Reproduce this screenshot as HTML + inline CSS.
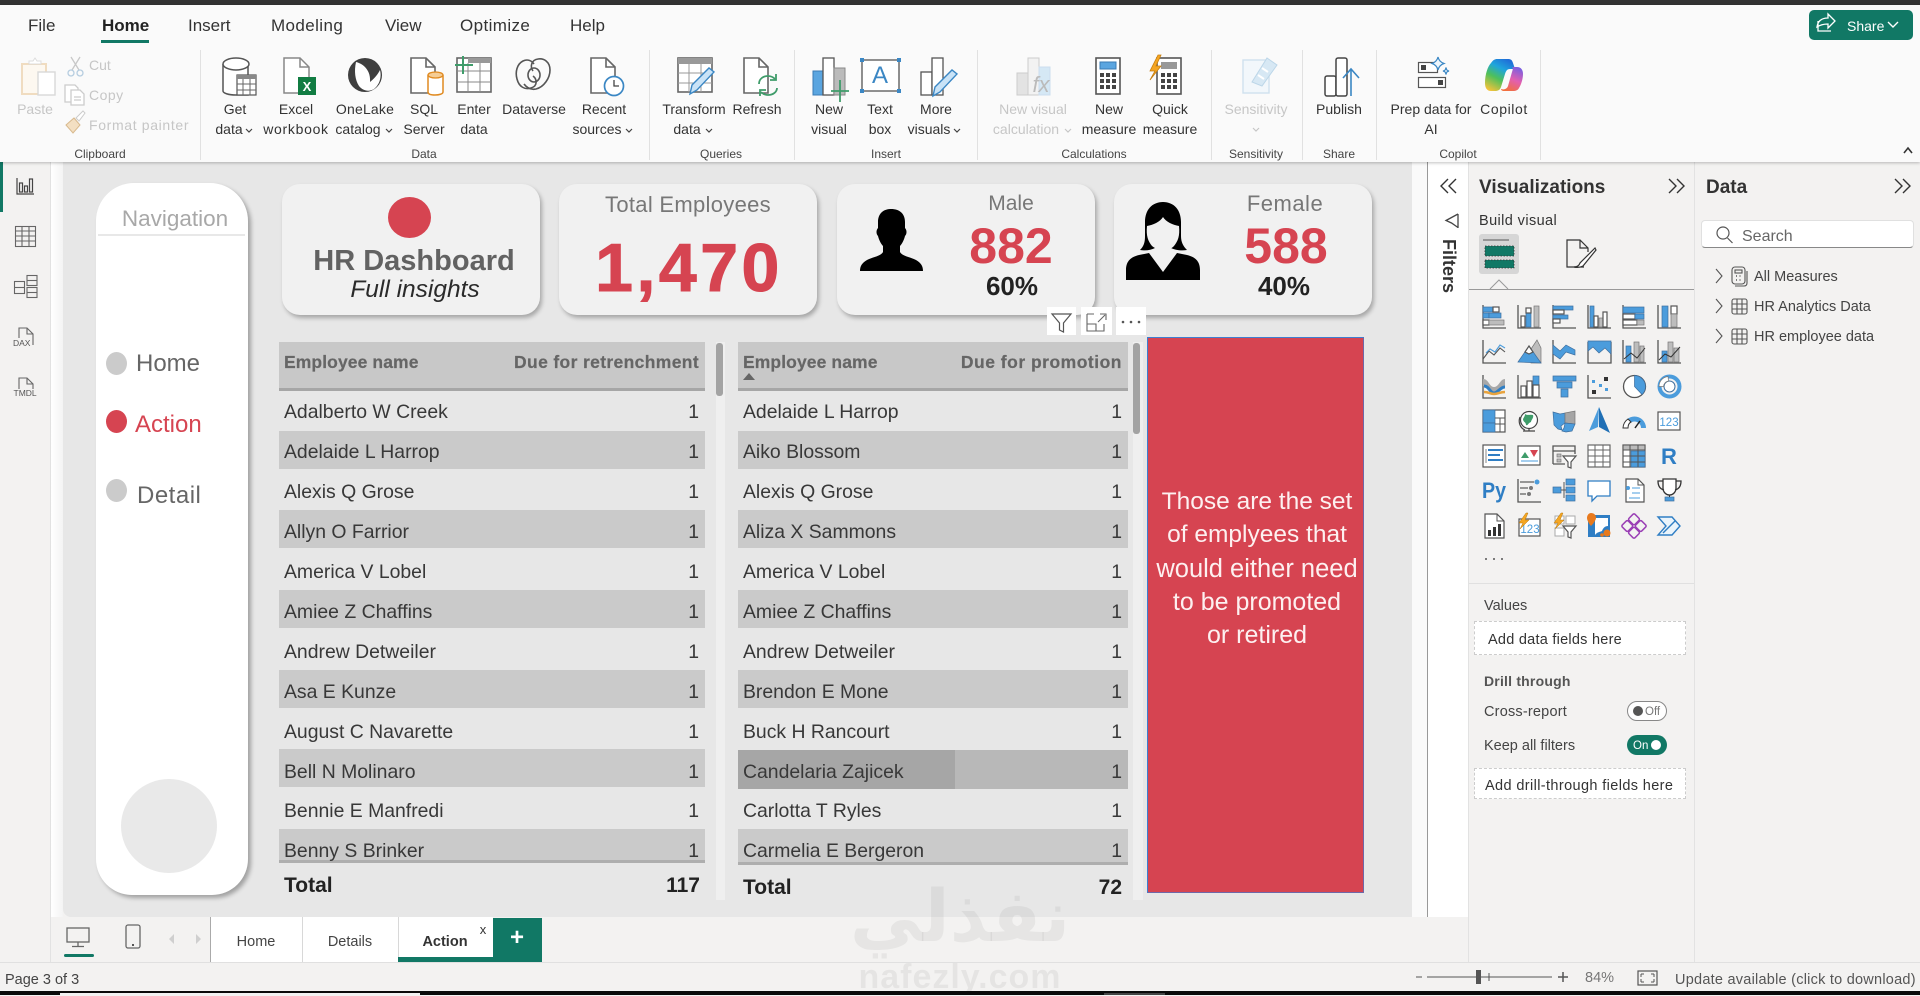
<!DOCTYPE html>
<html lang="en"><head><meta charset="utf-8"><title>HR Dashboard</title>
<style>
html,body{margin:0;padding:0;width:1920px;height:995px;overflow:hidden;background:#f3f2f1;font-family:"Liberation Sans",sans-serif;color:#333}
.a{position:absolute}
.t{position:absolute;line-height:0;white-space:nowrap;margin-top:1px}
.c{transform:translateX(-50%)}
.rl{font-size:14px;color:#333;margin-top:0}
.rd{font-size:14px;color:#c6c6c6;margin-top:0}
.gl{font-size:12px;color:#444;margin-top:1px}
.tab{font-size:17px;color:#333;margin-top:.5px}
.sep{position:absolute;top:50px;height:110px;width:1px;background:#e1e1e1}
.card{position:absolute;top:184px;height:131px;background:#f1f1f1;border-radius:18px;box-shadow:2px 3px 4px rgba(0,0,0,.28)}
.band{position:absolute;height:38px;background:#cacaca}
.r{position:absolute;height:0;line-height:0;font-size:19.4px;color:#383838;display:flex;justify-content:space-between;white-space:nowrap;margin-top:1.5px}
.red{color:#d64451}
.pane{font-size:14.5px;color:#444}
svg text{font-family:"Liberation Sans",sans-serif}
.s{fill:none;stroke:#555;stroke-width:1.3}
.sd{fill:none;stroke:#444;stroke-width:1.6}
.b{fill:#4b9cdc;stroke:#3f6f9f;stroke-width:.7}
.g{fill:#bdbdbd;stroke:#777;stroke-width:.7}
.w{fill:#fff;stroke:#555;stroke-width:1.2}
</style></head><body>

<div class="a" style="left:0;top:0;width:1920px;height:5px;background:#333"></div>
<div class="a" style="left:0;top:5px;width:1920px;height:157px;background:#fafafa;box-shadow:0 1px 3px rgba(0,0,0,.25);z-index:3"></div>

<div style="position:absolute;left:0;top:0;width:1920px;height:165px;z-index:4">
<span class="t tab" style="left:28px;top:25px">File</span>
<span class="t tab" style="left:102px;top:25px;font-weight:bold;color:#222">Home</span>
<span class="t tab" style="left:188px;top:25px">Insert</span>
<span class="t tab" style="left:271px;top:25px;letter-spacing:.4px">Modeling</span>
<span class="t tab" style="left:385px;top:25px">View</span>
<span class="t tab" style="left:460px;top:25px;letter-spacing:.4px">Optimize</span>
<span class="t tab" style="left:570px;top:25px">Help</span>
<div class="a" style="left:101px;top:40px;width:48px;height:3px;background:#117865"></div>

<span class="t rd c" style="left:35px;top:109px">Paste</span>
<span class="t rd" style="left:89px;top:65px">Cut</span>
<span class="t rd" style="left:89px;top:95px;letter-spacing:.5px">Copy</span>
<span class="t rd" style="left:89px;top:125px;letter-spacing:.65px">Format painter</span>
<span class="t gl c" style="left:100px;top:153px">Clipboard</span>
<div class="sep" style="left:200px"></div>

<span class="t rl c" style="left:235px;top:109px">Get</span><span class="t rl c" style="left:229px;top:129px">data</span>
<span class="t rl c" style="left:296px;top:109px">Excel</span><span class="t rl c" style="left:296px;top:129px;letter-spacing:.7px">workbook</span>
<span class="t rl c" style="left:365px;top:109px;letter-spacing:.2px">OneLake</span><span class="t rl c" style="left:358px;top:129px">catalog</span>
<span class="t rl c" style="left:424px;top:109px">SQL</span><span class="t rl c" style="left:424px;top:129px">Server</span>
<span class="t rl c" style="left:474px;top:109px">Enter</span><span class="t rl c" style="left:474px;top:129px">data</span>
<span class="t rl c" style="left:534px;top:109px">Dataverse</span>
<span class="t rl c" style="left:604px;top:109px">Recent</span><span class="t rl c" style="left:597px;top:129px">sources</span>
<span class="t gl c" style="left:424px;top:153px">Data</span>
<div class="sep" style="left:649px"></div>

<span class="t rl c" style="left:694px;top:109px">Transform</span><span class="t rl c" style="left:687px;top:129px">data</span>
<span class="t rl c" style="left:757px;top:109px">Refresh</span>
<span class="t gl c" style="left:721px;top:153px">Queries</span>
<div class="sep" style="left:794px"></div>

<span class="t rl c" style="left:829px;top:109px">New</span><span class="t rl c" style="left:829px;top:129px">visual</span>
<span class="t rl c" style="left:880px;top:109px">Text</span><span class="t rl c" style="left:880px;top:129px">box</span>
<span class="t rl c" style="left:936px;top:109px">More</span><span class="t rl c" style="left:929px;top:129px">visuals</span>
<span class="t gl c" style="left:886px;top:153px">Insert</span>
<div class="sep" style="left:977px"></div>

<span class="t rd c" style="left:1033px;top:109px">New visual</span><span class="t rd c" style="left:1026px;top:129px">calculation</span>
<span class="t rl c" style="left:1109px;top:109px">New</span><span class="t rl c" style="left:1109px;top:129px">measure</span>
<span class="t rl c" style="left:1170px;top:109px">Quick</span><span class="t rl c" style="left:1170px;top:129px">measure</span>
<span class="t gl c" style="left:1094px;top:153px">Calculations</span>
<div class="sep" style="left:1211px"></div>

<span class="t rd c" style="left:1256px;top:109px">Sensitivity</span>
<span class="t gl c" style="left:1256px;top:153px">Sensitivity</span>
<div class="sep" style="left:1302px"></div>

<span class="t rl c" style="left:1339px;top:109px">Publish</span>
<span class="t gl c" style="left:1339px;top:153px">Share</span>
<div class="sep" style="left:1376px"></div>

<span class="t rl c" style="left:1431px;top:109px">Prep data for</span><span class="t rl c" style="left:1431px;top:129px">AI</span>
<span class="t rl c" style="left:1504px;top:109px;letter-spacing:.6px">Copilot</span>
<span class="t gl c" style="left:1458px;top:153px">Copilot</span>
<div class="sep" style="left:1540px"></div>

<div class="a" style="left:1809px;top:10px;width:104px;height:30px;background:#117865;border-radius:5px"></div>
<span class="t" style="left:1847px;top:25px;font-size:14px;color:#fff">Share</span>

<svg class="a" style="left:0;top:0" width="1920" height="165" viewBox="0 0 1920 165">
<!-- chevrons -->
<g fill="none" stroke="#444" stroke-width="1.2">
<path d="M246 129l3 3 3-3M386 129l3 3 3-3M626 129l3 3 3-3M706 129l3 3 3-3M954 129l3 3 3-3"/>
<path d="M1065 129l3 3 3-3M1253 128l3 3 3-3" stroke="#c6c6c6"/>
<path d="M1904 153l4-5 4 5" stroke="#333" stroke-width="1.6"/>
<path d="M1888 22l5 5 5-5" stroke="#fff" stroke-width="1.4"/>
<path d="M1818 21v10h13M1817 27c1-7 6-9 11-9v-4l7 7-7 7v-4c-5 0-8 1-11 3z" stroke="#fff" stroke-width="1.3"/>
</g>
<!-- Paste -->
<rect x="22" y="64" width="24" height="30" fill="#fdf8f0" stroke="#f0dcc0" stroke-width="2"/>
<path d="M29 64v-3h4l2-3 2 3h4v3z" fill="#fff" stroke="#ddd"/>
<rect x="38" y="72" width="17" height="23" fill="#fff" stroke="#d8d8d8" stroke-width="1.4"/>
<!-- Cut -->
<g fill="none" stroke="#c8c8c8" stroke-width="1.3"><path d="M71 57l8 13M80 57l-8 13"/><circle cx="71" cy="73" r="3" stroke="#b6cde0"/><circle cx="80" cy="73" r="3" stroke="#b6cde0"/></g>
<!-- Copy -->
<g fill="#fff" stroke="#ccc" stroke-width="1.3"><path d="M65 85h10l3 3v14H65z"/><path d="M71 90h9l4 4v11H71z"/><path d="M74 97h7M74 100h7" fill="none"/></g>
<!-- Format painter -->
<path d="M66 125l8-7 6 7-7 8z" fill="#f3dfc2" stroke="#d8b98d"/><path d="M76 118l7-7 2 2-6 8z" fill="#fff" stroke="#ccc"/>
<!-- Get data -->
<path d="M223 64v27c0 2 5 4 13 4h12V64" fill="#fff" stroke="#555" stroke-width="1.5"/><ellipse cx="236" cy="64" rx="13" ry="6" fill="#fff" stroke="#555" stroke-width="1.5"/>
<rect x="237" y="75" width="19" height="20" fill="#fff" stroke="#555" stroke-width="1.2"/><rect x="237" y="75" width="19" height="4" fill="#888"/><path d="M243 79v16M250 79v16M237 84h19M237 90h19" stroke="#666" fill="none"/>
<!-- Excel -->
<path d="M284 58h16l9 9v26h-25z" fill="#fff" stroke="#888" stroke-width="1.5"/><path d="M300 58v9h9" fill="none" stroke="#888" stroke-width="1.5"/>
<rect x="298" y="77" width="18" height="18" fill="#117c42"/><text x="307" y="91" font-size="13" font-weight="bold" fill="#fff" text-anchor="middle">X</text>
<!-- OneLake -->
<circle cx="365" cy="75" r="17" fill="#3f3f3f"/><path d="M356 62c8 2 15 9 14 20 5-4 8-8 10-12 2 8-1 15-6 19-5 3-11 2-15-3-4-6-5-15-3-24z" fill="#fff"/>
<!-- SQL -->
<path d="M411 58h15l9 9v26h-24z" fill="#fff" stroke="#666" stroke-width="1.6"/><path d="M426 58v9h9" fill="none" stroke="#666" stroke-width="1.6"/>
<path d="M428 75v17c0 2 3 3 7 3s8-1 8-3V75" fill="#fff" stroke="#e08a20" stroke-width="1.5"/><ellipse cx="435.500" cy="75" rx="7.500" ry="3" fill="#f5cd95" stroke="#e08a20" stroke-width="1.3"/>
<!-- Enter data -->
<rect x="457" y="58" width="34" height="34" fill="#fff" stroke="#666" stroke-width="1.6"/><rect x="468" y="58" width="23" height="5" fill="#999"/><path d="M468 63v29M480 63v29M457 71h34M457 82h34" stroke="#888" fill="none"/>
<path d="M463 56v18M455 65h18" stroke="#3f9c6a" stroke-width="2" fill="none"/>
<!-- Dataverse -->
<g fill="none" stroke="#555" stroke-width="1.6"><path d="M534 64c-3-4-7-5-11-3-6 3-8 11-6 18 2 8 8 11 14 9 7-2 6-9 2-12"/><path d="M524 84c3 4 7 6 12 5 8-2 14-11 14-19 0-8-6-12-12-11-7 1-8 8-5 12"/><ellipse cx="534" cy="75" rx="6" ry="7"/></g>
<!-- Recent -->
<path d="M591 58h15l9 9v26h-24z" fill="#fff" stroke="#666" stroke-width="1.6"/><path d="M606 58v9h9" fill="none" stroke="#666" stroke-width="1.6"/>
<circle cx="614" cy="86" r="9.500" fill="#fff" stroke="#3b87c4" stroke-width="1.7"/><path d="M614 80v6h5" fill="none" stroke="#444" stroke-width="1.3"/>
<!-- Transform -->
<rect x="678" y="58" width="34" height="34" fill="#fff" stroke="#666" stroke-width="1.6"/><rect x="678" y="58" width="34" height="6" fill="#999"/><path d="M689 64v28M701 64v28M678 73h34M678 83h34" stroke="#999" fill="none"/>
<path d="M690 94l2-9 17-17 5 4-17 18z" fill="#c9e3f7" stroke="#3b87c4" stroke-width="1.4"/>
<!-- Refresh -->
<path d="M744 58h15l9 9v26h-24z" fill="#fff" stroke="#666" stroke-width="1.6"/><path d="M759 58v9h9" fill="none" stroke="#666" stroke-width="1.6"/>
<g fill="none" stroke="#3f9c6a" stroke-width="1.8"><path d="M759 84c0-5 4-8 9-8 3 0 5 1 7 3M777 88c0 4-4 7-9 7-3 0-5-1-7-3"/><path d="M776 74v6h-6M760 96v-6h6"/></g>
<!-- New visual -->
<rect x="813" y="71" width="10" height="24" fill="#5aa5e0" stroke="#3a7bb5"/><rect x="823" y="58" width="11" height="37" fill="#fff" stroke="#555" stroke-width="1.3"/><rect x="834" y="68" width="11" height="27" fill="#bbb" stroke="#888"/>
<path d="M840 80v22M831 91h18" stroke="#3f9c6a" stroke-width="1.8" fill="none"/>
<!-- Text box -->
<rect x="862" y="60" width="37" height="31" fill="#fff" stroke="#555" stroke-width="1.3"/><g fill="#3b87c4"><rect x="860" y="58" width="4" height="4"/><rect x="897" y="58" width="4" height="4"/><rect x="860" y="89" width="4" height="4"/><rect x="897" y="89" width="4" height="4"/></g>
<text x="880" y="83" font-size="24" fill="#3b87c4" text-anchor="middle">A</text>
<!-- More visuals -->
<rect x="921" y="72" width="11" height="23" fill="#fff" stroke="#555" stroke-width="1.3"/><rect x="932" y="58" width="11" height="37" fill="#fff" stroke="#555" stroke-width="1.3"/>
<path d="M933 96l2-9 17-17 5 4-17 18z" fill="#c9e3f7" stroke="#3b87c4" stroke-width="1.4"/>
<!-- New visual calc -->
<rect x="1017" y="73" width="11" height="22" fill="#e3e3e3" stroke="#ccc"/><rect x="1028" y="58" width="11" height="37" fill="#f2f2f2" stroke="#ccc"/><rect x="1039" y="67" width="11" height="28" fill="#d5e8f5" stroke="#cde"/>
<text x="1041" y="92" font-size="22" font-style="italic" font-family="Liberation Serif" fill="#bbb" text-anchor="middle">fx</text>
<!-- New measure -->
<rect x="1096" y="58" width="24" height="36" fill="#fff" stroke="#555" stroke-width="1.6"/><rect x="1100" y="62" width="16" height="7" fill="#5aa5e0" stroke="#3a7bb5"/>
<g fill="#444"><rect x="1100" y="73" width="4" height="4"/><rect x="1106" y="73" width="4" height="4"/><rect x="1112" y="73" width="4" height="4"/><rect x="1100" y="79" width="4" height="4"/><rect x="1106" y="79" width="4" height="4"/><rect x="1112" y="79" width="4" height="4"/><rect x="1100" y="85" width="4" height="4"/><rect x="1106" y="85" width="4" height="4"/><rect x="1112" y="85" width="4" height="4"/></g>
<!-- Quick measure -->
<rect x="1157" y="58" width="24" height="36" fill="#fff" stroke="#555" stroke-width="1.6"/><rect x="1161" y="62" width="16" height="7" fill="#999"/>
<g fill="#444"><rect x="1161" y="73" width="4" height="4"/><rect x="1167" y="73" width="4" height="4"/><rect x="1173" y="73" width="4" height="4"/><rect x="1161" y="79" width="4" height="4"/><rect x="1167" y="79" width="4" height="4"/><rect x="1173" y="79" width="4" height="4"/><rect x="1161" y="85" width="4" height="4"/><rect x="1167" y="85" width="4" height="4"/><rect x="1173" y="85" width="4" height="4"/></g>
<path d="M1158 55l-8 16h5l-5 9 11-14h-5l5-11z" fill="#f5a623" stroke="#c77f10" stroke-width=".8"/>
<!-- Sensitivity -->
<rect x="1243" y="60" width="26" height="33" fill="#f2f7fb" stroke="#cfe1ee" stroke-width="1.4"/><path d="M1252 82l15-24 10 7-15 21z" fill="#d7e8f4" stroke="#bcd6e8"/>
<path d="M1258 75l6 4M1262 68l6 4" stroke="#fff" stroke-width="2"/>
<!-- Publish -->
<g fill="#fff" stroke="#444" stroke-width="1.5"><rect x="1325" y="76" width="11" height="20" rx="2"/><rect x="1336" y="58" width="11" height="38" rx="2"/></g>
<path d="M1351 96V69M1343 78l8-9 8 9" fill="none" stroke="#3b87c4" stroke-width="1.6"/>
<!-- Prep data -->
<rect x="1418.500" y="62.500" width="19" height="10" fill="#fff" stroke="#555" stroke-width="1.200"/><rect x="1421" y="65" width="5" height="5" fill="#444"/>
<rect x="1418.500" y="77.500" width="27" height="10" fill="#fff" stroke="#555" stroke-width="1.200"/><rect x="1438" y="80" width="5" height="5" fill="#444"/>
<path d="M1438 57c1 4 3 5.500 6 6.500-3 1-5 2.500-6 6.500-1-4-3-5.500-6-6.500 3-1 5-2.500 6-6.500zM1446 67.500c.5 2.500 1 3 3 3.500-2 .5-2.500 1-3 3.500-.5-2.500-1-3-3-3.500 2-.5 2.500-1 3-3.500z" fill="#eef6fc" stroke="#3b87c4" stroke-width="1.200"/>
<!-- Copilot -->
<defs>
<linearGradient id="cp1" x1="0.700" y1="0" x2="0.200" y2="1"><stop offset="0" stop-color="#1f6fd8"/><stop offset=".3" stop-color="#1fa5dc"/><stop offset=".6" stop-color="#4ec05a"/><stop offset="1" stop-color="#f3c23a"/></linearGradient>
<linearGradient id="cp3" x1="0.700" y1="0" x2="0.300" y2="1"><stop offset="0" stop-color="#7a5fe0"/><stop offset=".5" stop-color="#e25fb0"/><stop offset="1" stop-color="#f2703c"/></linearGradient>
</defs>
<path d="M1497 59h11c3 0 4 1 5 4l2 6h-5c-3 0-4 2-5 5l-4 13c-1 3-3 4-6 4h-4c-4 0-6-3-6-8 0-9 3-17 6-20 2-3 4-4 6-4z" fill="url(#cp1)"/>
<path d="M1512 67h5c4 0 6 3 6 7 0 5-2 11-4 14-1 2-3 3-6 3h-9c-2 0-3-1-3-2 3 1 6 0 7-3l4-14c1-3 1-4 0-5z" fill="url(#cp3)"/>
</svg>
</div>

<!-- left sidebar -->
<div class="a" style="left:0;top:162px;width:50px;height:755px;background:#f3f2f1;border-right:1px solid #e2e2e2"></div>
<div class="a" style="left:51px;top:162px;width:12px;height:755px;background:linear-gradient(90deg,#fff,#f4f4f4)"></div>
<div class="a" style="left:0;top:162px;width:3px;height:50px;background:#117865"></div>
<svg class="a" style="left:0;top:162px" width="50" height="245" viewBox="0 162 50 245">
<g fill="none" stroke="#444" stroke-width="1.2"><path d="M17 178v16h17"/><rect x="19.500" y="183" width="3" height="9"/><rect x="24.500" y="186" width="3" height="6"/><rect x="29.500" y="179" width="3" height="13"/></g>
<g fill="none" stroke="#666" stroke-width="1.1"><rect x="15.500" y="226.500" width="20" height="20"/><path d="M15.500 231h20M15.500 236h20M15.500 241h20M22 226.500v20M29 226.500v20"/></g>
<g fill="none" stroke="#666" stroke-width="1.1"><rect x="14.500" y="281.500" width="10" height="12"/><path d="M14.500 287.500h10"/><rect x="27" y="275.500" width="10" height="10"/><path d="M27 280.500h10"/><rect x="27" y="287.500" width="10" height="10"/><path d="M27 292.500h10"/></g>
<g fill="none" stroke="#666" stroke-width="1.1"><path d="M19 338v-10h8l6 6v11"/><path d="M27 328v6h6"/></g>
<text x="13" y="346" font-size="8.500" fill="#555">DAX</text>
<g fill="none" stroke="#666" stroke-width="1.1"><path d="M19 389v-11h8l6 6v5"/><path d="M27 378v6h6"/></g>
<text x="13.500" y="396" font-size="8.500" fill="#555">TMDL</text>
</svg>

<!-- canvas -->
<div class="a" style="left:63px;top:162px;width:1349px;height:755px;background:#e7e7e7;border-radius:0 0 0 8px"></div>
<div class="a" style="left:1412px;top:162px;width:15px;height:755px;background:#fafafa"></div>
<div class="a" style="left:1427px;top:162px;width:1px;height:756px;background:#999"></div>
<div class="a" style="left:1428px;top:162px;width:40px;height:756px;background:#fff"></div>

<!-- nav -->
<div class="a" style="left:96px;top:183px;width:152px;height:712px;background:#fff;border-radius:38px 38px 36px 36px;box-shadow:3px 3px 4px rgba(0,0,0,.3)"></div>
<span class="t c" style="left:175px;top:218px;font-size:22.500px;color:#a8a8a8">Navigation</span>
<div class="a" style="left:98px;top:234px;width:147px;height:2px;background:#e8e8e8"></div>
<div class="a" style="left:106px;top:352px;width:21px;height:23px;border-radius:50%;background:#cbcbcb"></div>
<span class="t" style="left:136px;top:363px;font-size:24px;color:#666">Home</span>
<div class="a" style="left:106px;top:410px;width:21px;height:23px;border-radius:50%;background:#d64451"></div>
<span class="t red" style="left:135px;top:423.500px;font-size:24px">Action</span>
<div class="a" style="left:106px;top:479px;width:21px;height:23px;border-radius:50%;background:#cbcbcb"></div>
<span class="t" style="left:137px;top:494.500px;font-size:24px;color:#666;letter-spacing:.5px">Detail</span>
<div class="a" style="left:121px;top:779px;width:96px;height:94px;border-radius:50%;background:#e9e9e9"></div>

<!-- cards -->
<div class="card" style="left:282px;width:258px"></div>
<div class="a" style="left:388px;top:197px;width:43px;height:41px;border-radius:50%;background:#d64451"></div>
<span class="t c" style="left:414px;top:260px;font-size:29px;font-weight:bold;color:#626262">HR Dashboard</span>
<span class="t c" style="left:415px;top:288.500px;font-size:24.500px;font-style:italic;color:#2a2a2a">Full insights</span>

<div class="card" style="left:559px;width:258px"></div>
<span class="t c" style="left:688px;top:204px;font-size:22px;color:#777;letter-spacing:.3px">Total Employees</span>
<span class="t c red" style="left:689px;top:267px;font-size:68px;font-weight:bold;letter-spacing:3.5px;-webkit-text-stroke:1px #d64451">1,470</span>

<div class="card" style="left:837px;width:258px"></div>
<span class="t c" style="left:1011px;top:203px;font-size:21px;color:#777">Male</span>
<span class="t c red" style="left:1011px;top:245px;font-size:50px;font-weight:bold">882</span>
<span class="t c" style="left:1012px;top:285px;font-size:26px;font-weight:bold;color:#222">60%</span>

<div class="card" style="left:1114px;width:258px"></div>
<span class="t c" style="left:1285px;top:203px;font-size:22px;color:#777;letter-spacing:.5px">Female</span>
<span class="t c red" style="left:1286px;top:245px;font-size:50px;font-weight:bold">588</span>
<span class="t c" style="left:1284px;top:285px;font-size:26px;font-weight:bold;color:#222">40%</span>

<svg class="a" style="left:850px;top:195px" width="360" height="145" viewBox="850 195 360 145">
<path d="M891 209c-8 0-13 5-13 13v6c-2 2-2 6 0 8 1 4 3 8 5 10v6c-2 4-10 5-16 8-5 3-7 6-7 11h63c0-5-2-8-7-11-6-3-14-4-16-8v-6c2-2 4-6 5-10 2-2 2-6 0-8v-6c0-8-5-13-14-13z" fill="#000"/>
<path d="M1163 202c-11 0-18 8-18 20v14c0 6-1 10-5 14 6 1 11 0 15-2h16c4 2 10 3 16 2-4-4-6-8-6-14v-14c0-12-7-20-18-20z" fill="#000"/>
<path d="M1147 226c6-1 13-4 16-9 3 5 10 8 16 9 1 10-1 15-5 20-3 3-7 5-11 5-3 0-7-2-11-5-4-5-6-10-5-20z" fill="#f1f1f1"/>
<path d="M1126 280v-10c0-9 5-13 13-15l10-2 14 19 14-19 10 2c8 2 13 6 13 15v10z" fill="#000"/>
</svg>

<!-- visual toolbar -->
<div class="a" style="left:1047px;top:307px;width:29px;height:28px;background:#fff"></div>
<div class="a" style="left:1081px;top:307px;width:31px;height:28px;background:#fff"></div>
<div class="a" style="left:1116px;top:307px;width:30px;height:28px;background:#fff"></div>
<svg class="a" style="left:1047px;top:307px" width="100" height="28" viewBox="1047 307 100 28">
<path d="M1052 314h19l-7.500 9v9l-4-2v-7z" fill="none" stroke="#555" stroke-width="1.2"/>
<path d="M1087 314h7M1087 314v17h17v-7M1087 324h9v7M1098 322l7-7M1100 314h6v6" fill="none" stroke="#666" stroke-width="1.1"/>
<g fill="#555"><circle cx="1123" cy="322" r="1.300"/><circle cx="1131" cy="322" r="1.300"/><circle cx="1139" cy="322" r="1.300"/></g>
</svg>

<!-- Table 1 -->
<div class="a" style="left:279px;top:342px;width:426px;height:49px;background:#c8c8c8;border-bottom:3px solid #a6a6a6;box-sizing:border-box"></div>
<span class="t" style="left:284px;top:361px;font-size:17.500px;font-weight:bold;color:#666;letter-spacing:.1px;-webkit-text-stroke:.2px #666">Employee name</span>
<span class="t" style="right:1221px;top:361px;font-size:17.500px;font-weight:bold;color:#666;letter-spacing:.35px;-webkit-text-stroke:.2px #666">Due for retrenchment</span>
<div class="a" style="left:716px;top:342px;width:9px;height:558px;background:#efefef"></div>
<div class="a" style="left:716px;top:343px;width:7px;height:53px;background:#a3a3a3;border-radius:3px"></div>
<div class="band" style="left:279px;width:426px;top:431px"></div>
<div class="band" style="left:279px;width:426px;top:510px"></div>
<div class="band" style="left:279px;width:426px;top:590px"></div>
<div class="band" style="left:279px;width:426px;top:670px"></div>
<div class="band" style="left:279px;width:426px;top:749px"></div>
<div class="band" style="left:279px;width:426px;top:829px;height:34px;border-bottom:3px solid #aeaeae;box-sizing:border-box"></div>
<div class="r" style="left:284px;width:415px;top:410px"><span>Adalberto W Creek</span><span>1</span></div>
<div class="r" style="left:284px;width:415px;top:450px"><span>Adelaide L Harrop</span><span>1</span></div>
<div class="r" style="left:284px;width:415px;top:490px"><span>Alexis Q Grose</span><span>1</span></div>
<div class="r" style="left:284px;width:415px;top:530px"><span>Allyn O Farrior</span><span>1</span></div>
<div class="r" style="left:284px;width:415px;top:570px"><span>America V Lobel</span><span>1</span></div>
<div class="r" style="left:284px;width:415px;top:610px"><span>Amiee Z Chaffins</span><span>1</span></div>
<div class="r" style="left:284px;width:415px;top:650px"><span>Andrew Detweiler</span><span>1</span></div>
<div class="r" style="left:284px;width:415px;top:690px"><span>Asa E Kunze</span><span>1</span></div>
<div class="r" style="left:284px;width:415px;top:730px"><span>August C Navarette</span><span>1</span></div>
<div class="r" style="left:284px;width:415px;top:770px"><span>Bell N Molinaro</span><span>1</span></div>
<div class="r" style="left:284px;width:415px;top:809px"><span>Bennie E Manfredi</span><span>1</span></div>
<div class="r" style="left:284px;width:415px;top:849px"><span>Benny S Brinker</span><span>1</span></div>
<div class="r" style="left:284px;width:416px;top:884.500px;font-weight:bold;font-size:21px;color:#222"><span>Total</span><span>117</span></div>

<!-- Table 2 -->
<div class="a" style="left:738px;top:342px;width:390px;height:49px;background:#c8c8c8;border-bottom:3px solid #a6a6a6;box-sizing:border-box"></div>
<span class="t" style="left:743px;top:361px;font-size:17.500px;font-weight:bold;color:#666;letter-spacing:.1px;-webkit-text-stroke:.2px #666">Employee name</span>
<span class="t" style="right:798px;top:361px;font-size:17.500px;font-weight:bold;color:#666;letter-spacing:.5px;-webkit-text-stroke:.2px #666">Due for promotion</span>
<svg class="a" style="left:742px;top:371px" width="16" height="10"><path d="M1 9L7 2l6 7z" fill="#666"/></svg>
<div class="a" style="left:1133px;top:342px;width:10px;height:558px;background:#efefef"></div>
<div class="a" style="left:1133px;top:343px;width:7px;height:91px;background:#a3a3a3;border-radius:3px"></div>
<div class="band" style="left:738px;width:390px;top:431px"></div>
<div class="band" style="left:738px;width:390px;top:510px"></div>
<div class="band" style="left:738px;width:390px;top:590px"></div>
<div class="band" style="left:738px;width:390px;top:670px"></div>
<div class="band" style="left:738px;width:390px;top:750px;background:#b8b8b8;height:39px"></div>
<div class="band" style="left:738px;width:217px;top:750px;background:#a6a6a6;height:39px"></div>
<div class="band" style="left:738px;width:390px;top:829px;height:36px;border-bottom:3px solid #aeaeae;box-sizing:border-box"></div>
<div class="r" style="left:743px;width:379px;top:410px"><span>Adelaide L Harrop</span><span>1</span></div>
<div class="r" style="left:743px;width:379px;top:450px"><span>Aiko Blossom</span><span>1</span></div>
<div class="r" style="left:743px;width:379px;top:490px"><span>Alexis Q Grose</span><span>1</span></div>
<div class="r" style="left:743px;width:379px;top:530px"><span>Aliza X Sammons</span><span>1</span></div>
<div class="r" style="left:743px;width:379px;top:570px"><span>America V Lobel</span><span>1</span></div>
<div class="r" style="left:743px;width:379px;top:610px"><span>Amiee Z Chaffins</span><span>1</span></div>
<div class="r" style="left:743px;width:379px;top:650px"><span>Andrew Detweiler</span><span>1</span></div>
<div class="r" style="left:743px;width:379px;top:690px"><span>Brendon E Mone</span><span>1</span></div>
<div class="r" style="left:743px;width:379px;top:730px"><span>Buck H Rancourt</span><span>1</span></div>
<div class="r" style="left:743px;width:379px;top:770px"><span>Candelaria Zajicek</span><span>1</span></div>
<div class="r" style="left:743px;width:379px;top:809px"><span>Carlotta T Ryles</span><span>1</span></div>
<div class="r" style="left:743px;width:379px;top:849px"><span>Carmelia E Bergeron</span><span>1</span></div>
<div class="r" style="left:743px;width:379px;top:886.500px;font-weight:bold;font-size:21px;color:#222"><span>Total</span><span>72</span></div>

<!-- Red box -->
<div class="a" style="left:1147px;top:337px;width:217px;height:556px;background:#d64451;border:1px solid #3f7fd0;border-right-color:#6f68a8;border-bottom-color:#6f68a8;box-sizing:border-box"></div>
<span class="t c" style="left:1257px;top:500.500px;font-size:24.500px;color:#fdf0f0">Those are the set</span>
<span class="t c" style="left:1257px;top:534px;font-size:24.500px;color:#fdf0f0">of emplyees that</span>
<span class="t c" style="left:1257px;top:567.500px;font-size:25.500px;color:#fdf0f0">would either need</span>
<span class="t c" style="left:1257px;top:601px;font-size:25px;color:#fdf0f0">to be promoted</span>
<span class="t c" style="left:1257px;top:634px;font-size:25px;color:#fdf0f0">or retired</span>

<!-- tabs strip -->
<div class="a" style="left:0;top:917px;width:1468px;height:45px;background:#f3f2f1"></div>
<div class="a" style="left:50px;top:917px;width:1px;height:45px;background:#e2e2e2"></div>
<div class="a" style="left:0;top:962px;width:1920px;height:1px;background:#e0e0e0"></div>
<div class="a" style="left:64px;top:954px;width:30px;height:3px;background:#117865;border-radius:2px"></div>
<svg class="a" style="left:60px;top:920px" width="150" height="35" viewBox="60 920 150 35">
<g fill="none" stroke="#666" stroke-width="1.3"><rect x="67" y="928" width="22" height="14"/><path d="M78 942v4M72 946.500h12"/><rect x="126" y="925" width="14" height="23" rx="2"/></g><rect x="132" y="944" width="2" height="2" fill="#555"/>
<path d="M174 934l-5 5 5 5zM196 934l5 5-5 5z" fill="#cfcfcf"/>
</svg>
<div class="a" style="left:210px;top:917px;width:92px;height:45px;background:#fff;border-left:1px solid #aaa;box-sizing:border-box"></div>
<div class="a" style="left:302px;top:917px;width:96px;height:45px;background:#fff;border-left:1px solid #d8d8d8;box-sizing:border-box"></div>
<div class="a" style="left:398px;top:917px;width:95px;height:45px;background:#fff;border-left:1px solid #d8d8d8;box-sizing:border-box"></div>
<div class="a" style="left:398px;top:957px;width:95px;height:5px;background:#117865"></div>
<div class="a" style="left:493px;top:918px;width:49px;height:44px;background:#117865"></div>
<span class="t c" style="left:256px;top:941px;font-size:14.500px;color:#444">Home</span>
<span class="t c" style="left:350px;top:941px;font-size:14.500px;color:#444">Details</span>
<span class="t c" style="left:445px;top:941px;font-size:14.500px;font-weight:bold;color:#333">Action</span>
<span class="t c" style="left:483px;top:929px;font-size:13px;color:#333">x</span>
<span class="t c" style="left:517px;top:937px;font-size:24px;font-weight:bold;color:#fff">+</span>

<!-- Filters pane -->
<svg class="a" style="left:1428px;top:165px" width="40" height="70" viewBox="1428 165 40 70">
<path d="M1448 179l-7 7 7 7M1456 179l-7 7 7 7" fill="none" stroke="#333" stroke-width="1.400"/>
<path d="M1458 214l-12 6.500 5.500 2.500 6.500 4.500" fill="none" stroke="#444" stroke-width="1.300"/><path d="M1458 214v14" stroke="#444" stroke-width="1.300"/>
</svg>
<span class="a" style="left:1449px;top:266px;transform:translate(-50%,-50%) rotate(90deg);font-size:18px;font-weight:bold;color:#333;line-height:1;white-space:nowrap">Filters</span>

<!-- Viz pane -->
<div class="a" style="left:1468px;top:162px;width:1px;height:800px;background:#e2e2e2"></div>
<div class="a" style="left:1694px;top:162px;width:1px;height:800px;background:#e2e2e2"></div>
<span class="t" style="left:1479px;top:187px;font-size:19px;font-weight:bold;color:#333">Visualizations</span>
<span class="t" style="left:1706px;top:187px;font-size:19px;font-weight:bold;color:#333">Data</span>
<span class="t" style="left:1479px;top:220px;font-size:14.500px;color:#333;letter-spacing:.4px">Build visual</span>
<div class="a" style="left:1479px;top:234px;width:40px;height:40px;background:#d6d6d6;border-radius:3px"></div>
<div class="a" style="left:1469px;top:289px;width:225px;height:1px;background:#999"></div>
<div class="a" style="left:1701px;top:220px;width:213px;height:28px;background:#fff;border:1px solid #e0e0e0;border-bottom-color:#888;border-radius:4px;box-sizing:border-box"></div>
<span class="t" style="left:1742px;top:236px;font-size:16px;color:#666">Search</span>
<span class="t pane" style="left:1754px;top:276px">All Measures</span>
<span class="t pane" style="left:1754px;top:306px">HR Analytics Data</span>
<span class="t pane" style="left:1754px;top:336px">HR employee data</span>

<span class="t pane" style="left:1484px;top:605px">Values</span>
<div class="a" style="left:1474px;top:621px;width:212px;height:34px;background:#fff;border:1px dashed #ccc;box-sizing:border-box"></div>
<span class="t pane" style="left:1488px;top:639px;color:#333;letter-spacing:.25px">Add data fields here</span>
<span class="t pane" style="left:1484px;top:680px;font-weight:bold;color:#555;font-size:14px;letter-spacing:.2px">Drill through</span>
<span class="t pane" style="left:1484px;top:711px;letter-spacing:.2px">Cross-report</span>
<span class="t pane" style="left:1484px;top:745px">Keep all filters</span>
<div class="a" style="left:1627px;top:701px;width:40px;height:20px;background:#fff;border:1px solid #888;border-radius:10px;box-sizing:border-box"></div>
<div class="a" style="left:1633px;top:706px;width:10px;height:10px;background:#555;border-radius:50%"></div>
<span class="t" style="left:1645px;top:711px;font-size:11.500px;color:#777">Off</span>
<div class="a" style="left:1627px;top:735px;width:40px;height:20px;background:#117865;border-radius:10px"></div>
<div class="a" style="left:1651px;top:740px;width:10px;height:10px;background:#fff;border-radius:50%"></div>
<span class="t" style="left:1633px;top:745px;font-size:11.500px;color:#fff">On</span>
<div class="a" style="left:1474px;top:768px;width:212px;height:31px;background:#fff;border:1px dashed #ccc;box-sizing:border-box"></div>
<span class="t pane" style="left:1485px;top:785px;color:#333;letter-spacing:.38px">Add drill-through fields here</span>
<div class="a" style="left:1469px;top:583px;width:225px;height:1px;background:#e0e0e0"></div>

<svg class="a" style="left:1468px;top:165px" width="452" height="410" viewBox="1468 165 452 410">
<!-- chevrons -->
<g fill="none" stroke="#333" stroke-width="1.400"><path d="M1669 179l7 7-7 7M1677 179l7 7-7 7M1895 179l7 7-7 7M1903 179l7 7-7 7"/></g>
<!-- build tile -->
<path d="M1483 240h26" stroke="#555" stroke-width="1"/>
<rect x="1485" y="246" width="29" height="10" fill="#117865" stroke="#333" stroke-dasharray="1.500 1.500" stroke-width=".8"/>
<rect x="1485" y="260" width="29" height="8" fill="#117865" stroke="#333" stroke-dasharray="1.500 1.500" stroke-width=".8"/>
<!-- format -->
<path d="M1584 267h-17v-27h13l8 8v4M1580 240v8h8" fill="none" stroke="#333" stroke-width="1.200"/>
<path d="M1574 267c3 0 5-1 6-4l15-15 1 2-13 16c-2 1-5 2-9 1z" fill="#fff" stroke="#333" stroke-width="1.200"/>
<!-- caret -->
<path d="M1490 289l9-9 9 9" fill="#f3f2f1" stroke="#999"/>
<!-- search -->
<circle cx="1723" cy="233" r="6" fill="none" stroke="#555" stroke-width="1.200"/><path d="M1727.500 238l5 5" stroke="#555" stroke-width="1.200"/>
<!-- tree -->
<g fill="none" stroke="#555" stroke-width="1.100"><path d="M1716 269l6 7-6 7M1716 299l6 7-6 7M1716 329l6 7-6 7"/>
<rect x="1732" y="267" width="13" height="17" rx="3"/><rect x="1735" y="270" width="7" height="3"/><path d="M1747 271v12c0 2-1 3-3 3h-9"/><path d="M1736 276h1M1739.500 276h1M1736 280h1M1739.500 280h1" stroke-width="1.400"/>
<rect x="1732" y="299" width="15" height="15" rx="2"/><path d="M1732 304h15M1732 309h15M1737 299v15M1742 299v15"/>
<rect x="1732" y="329" width="15" height="15" rx="2"/><path d="M1732 334h15M1732 339h15M1737 329v15M1742 329v15"/></g>

<!-- Row 1 -->
<g transform="translate(1482,304)"><path class="s" d="M1 1v23h23"/><rect class="b" x="1" y="3" width="10" height="5"/><rect class="w" x="11" y="3" width="6" height="5" /><rect class="b" x="1" y="9" width="6" height="5"/><rect class="b" x="7" y="9" width="12" height="5"/><rect class="w" x="1" y="16" width="6" height="5"/><rect class="g" x="7" y="16" width="15" height="5"/></g>
<g transform="translate(1517,304)"><path class="s" d="M1 1v23h23"/><rect class="w" x="4" y="12" width="4" height="11"/><rect class="b" x="9" y="9" width="5" height="14"/><rect class="w" x="9" y="4" width="5" height="5"/><rect class="g" x="17" y="2" width="5" height="21"/></g>
<g transform="translate(1552,304)"><path class="s" d="M1 1v23h23"/><rect class="b" x="1" y="2" width="20" height="4"/><rect class="w" x="1" y="6" width="11" height="4"/><rect class="b" x="1" y="11" width="15" height="4"/><rect class="w" x="1" y="15" width="7" height="4"/></g>
<g transform="translate(1587,304)"><path class="s" d="M1 1v23h23"/><rect class="b" x="3" y="2" width="4" height="21"/><rect class="w" x="7" y="12" width="4" height="11"/><rect class="g" x="12" y="14" width="4" height="9"/><rect class="w" x="16" y="8" width="4" height="15"/></g>
<g transform="translate(1622,304)"><path class="s" d="M1 1v23h23"/><rect class="b" x="1" y="3" width="21" height="6"/><rect class="w" x="1" y="10" width="12" height="5"/><rect class="b" x="13" y="10" width="9" height="5"/><rect class="w" x="1" y="16" width="14" height="5"/><rect class="g" x="15" y="16" width="7" height="5"/></g>
<g transform="translate(1657,304)"><path class="s" d="M1 1v23h23"/><rect class="b" x="5" y="2" width="6" height="21"/><rect class="w" x="14" y="2" width="6" height="8"/><rect class="g" x="14" y="10" width="6" height="13"/></g>
<!-- Row 2 -->
<g transform="translate(1482,339)"><path class="s" d="M1 1v23h23"/><path d="M1 20l6-8 5 4 6-7 5 4" fill="none" stroke="#555" stroke-width="1.100"/><path d="M4 14l4-4 5 3 5-7 5 3" fill="none" stroke="#4b9cdc" stroke-width="1.100"/></g>
<g transform="translate(1517,339)"><path class="g" d="M12 13l8-12 4 8v15H14z"/><path class="b" d="M1 23l11-16 12 17z"/><path class="w" d="M8 13l4-6 4 6-4 2z"/></g>
<g transform="translate(1552,339)"><path class="s" d="M1 1v23h23"/><path class="b" d="M1 6l7 6 6-6 9 5v5l-9-3-6 7-7-5z"/></g>
<g transform="translate(1587,339)"><path class="s" d="M1 3v21h23V3"/><path class="b" d="M1 2h23v13l-6-6-6 5-6-6-5 4z"/></g>
<g transform="translate(1622,339)"><path class="s" d="M1 1v23h23"/><rect class="b" x="4" y="7" width="5" height="16"/><rect class="g" x="12" y="3" width="5" height="20"/><rect class="g" x="18" y="7" width="4" height="16"/><path d="M2 20l7-6 6 5 8-10" fill="none" stroke="#333" stroke-width="1"/></g>
<g transform="translate(1657,339)"><path class="s" d="M1 1v23h23"/><rect class="b" x="5" y="12" width="5" height="11"/><rect class="g" x="11" y="3" width="5" height="20"/><rect class="g" x="17" y="9" width="5" height="14"/><path d="M2 21l6-6 6 3 9-10" fill="none" stroke="#333" stroke-width="1"/></g>
<!-- Row 3 -->
<g transform="translate(1482,374)"><path class="s" d="M1 1v23h23"/><path d="M1 5c6 0 6 8 11 8s6-8 11-8v7c-5 0-6 7-11 7s-6-7-11-7z" fill="#a8a8a8"/><path d="M2 12c5 0 6 7 10 7s6-6 11-6" fill="none" stroke="#2f7ec4" stroke-width="3"/><path d="M2 18c5 0 6 2 10 2s6-2 11-2" fill="none" stroke="#e8a33d" stroke-width="2.500"/></g>
<g transform="translate(1517,374)"><path class="s" d="M1 1v23h23"/><rect class="w" x="4" y="12" width="5" height="11"/><rect class="w" x="10" y="7" width="5" height="16"/><rect class="b" x="16" y="2" width="6" height="9"/><rect class="w" x="16" y="11" width="6" height="12"/></g>
<g transform="translate(1552,374)"><path class="b" d="M1 2h23v5H1z"/><path class="b" d="M5 8h15v6H5z"/><path class="b" d="M9 15h7v8H9z"/></g>
<g transform="translate(1587,374)"><path class="s" d="M1 1v23h23"/><g fill="#333"><rect x="5" y="16" width="4" height="4"/><rect x="17" y="3" width="4" height="4"/></g><g fill="#4b9cdc"><rect x="5" y="6" width="3" height="3"/><rect x="12" y="10" width="3" height="3"/><rect x="18" y="14" width="3" height="3"/></g></g>
<g transform="translate(1622,374)"><circle cx="12.500" cy="12.500" r="11" fill="#fff" stroke="#555" stroke-width="1.300"/><path class="b" d="M12.500 1.500a11 11 0 0 1 7.500 19l-7.500-8z"/></g>
<g transform="translate(1657,374)"><circle cx="12.500" cy="12.500" r="10" fill="none" stroke="#4b9cdc" stroke-width="4"/><circle cx="12.500" cy="12.500" r="5.500" fill="#fff" stroke="#3f6f9f"/><path d="M2 12.500a10 10 0 0 1 9-10l.5 4.500a6 6 0 0 0-5 5.500z" fill="#fff" stroke="#777" stroke-width=".7"/></g>
<!-- Row 4 -->
<g transform="translate(1482,409)"><rect x="1" y="1" width="22" height="22" fill="#fff" stroke="#555" stroke-width="1.200"/><rect class="b" x="1" y="1" width="12" height="13"/><rect class="b" x="1" y="14" width="12" height="9"/><path d="M13 9h10M18 9v14M13 15h10" stroke="#555" stroke-width="1"/></g>
<g transform="translate(1517,409)"><circle cx="12" cy="11" r="8.500" fill="#fff" stroke="#444" stroke-width="1.200"/><path d="M8 5c3 2 5 0 8 1 1 3-2 5-2 7-3 1-3 4-5 3 0-3-3-3-3-6 1-2 2-3 2-5z" fill="#3f9c6a"/><path d="M6 22h12M12 19v3M3 8c-2 5 0 11 5 13" fill="none" stroke="#444" stroke-width="1.200"/></g>
<g transform="translate(1552,409)"><path d="M1 3l7 2 5-1v10l-4 3 1 4-4-1-4-4z" fill="#4b9cdc" stroke="#3f6f9f" stroke-width=".7"/><path class="g" d="M13 4l10-2v13l-10-1z" style="fill:#a5a5a5"/><path class="b" d="M13 14l10 1-3 7-6 1-4-1 2-3z"/></g>
<g transform="translate(1587,409)"><path d="M12 -2L2 22l9-4z" fill="#4b9cdc"/><path d="M12 -2l11 26-11-6z" fill="#1f6fb5"/></g>
<g transform="translate(1622,409)"><path d="M1 19a11.500 11.500 0 0 1 23 0h-5a6.500 6.500 0 0 0-13 0z" fill="#4b9cdc"/><path d="M1 19a11.500 11.500 0 0 1 5-9l3 3c-2 1-3 3-3 6z" fill="#fff" stroke="#333"/><path d="M13 19l5-7" stroke="#222" stroke-width="1.500"/></g>
<g transform="translate(1657,409)"><rect x="1" y="3" width="22" height="18" fill="#fff" stroke="#555" stroke-width="1.200"/><text x="12" y="17" font-size="11.500" fill="#4b9cdc" text-anchor="middle">123</text></g>
<!-- Row 5 -->
<g transform="translate(1482,444)"><rect x="1" y="1" width="22" height="22" fill="#fff" stroke="#555" stroke-width="1.200"/><path d="M4 5v14" stroke="#888"/><path d="M6 6h15M6 11h12M6 16h15" stroke="#2f7ec4" stroke-width="2"/></g>
<g transform="translate(1517,444)"><rect x="1" y="2" width="22" height="19" fill="#fff" stroke="#555" stroke-width="1.200"/><path d="M4 14l4-6 4 6z" fill="#3f9c6a"/><path d="M13 6h8l-4 7z" fill="#d64451"/><path d="M4 17h17" stroke="#4b9cdc"/></g>
<g transform="translate(1552,444)"><path class="s" d="M1 20V2h22v8M1 20h12"/><path class="s" d="M1 7h22"/><rect class="g" x="5" y="10" width="4" height="3"/><rect class="g" x="5" y="15" width="4" height="3"/><path d="M11 12h13l-5 6v6l-3-1v-5z" fill="#fff" stroke="#555" stroke-width="1.200"/></g>
<g transform="translate(1587,444)"><rect x="1" y="1" width="22" height="22" fill="#fff" stroke="#666" stroke-width="1.200"/><path d="M1 6h22M1 12h22M1 18h22M8 1v22M16 1v22" stroke="#666" fill="none"/></g>
<g transform="translate(1622,444)"><rect x="1" y="1" width="22" height="22" fill="#fff" stroke="#555" stroke-width="1.200"/><rect class="b" x="9" y="7" width="14" height="16"/><rect x="1" y="1" width="22" height="5" fill="#bbb" stroke="#555"/><path d="M1 12h22M1 18h22M8 1v22M16 1v22" stroke="#555" fill="none"/></g>
<text x="1669" y="464" font-size="22" font-weight="bold" fill="#2f7ec4" text-anchor="middle">R</text>
<!-- Row 6 -->
<text x="1494" y="498" font-size="22" font-weight="bold" fill="#2f7ec4" text-anchor="middle" textLength="24" lengthAdjust="spacingAndGlyphs">Py</text>
<g transform="translate(1517,478)"><path class="s" d="M1 1v23h23"/><path d="M3 4h14M3 10h8M3 16h6" stroke="#777" stroke-width="1.500"/><circle cx="20" cy="4" r="2.500" fill="#4b9cdc"/><circle cx="14" cy="10" r="2" fill="#777"/><circle cx="12" cy="16" r="2" fill="#777"/></g>
<g transform="translate(1552,478)"><rect class="b" x="1" y="9" width="8" height="6"/><rect class="b" x="14" y="1" width="9" height="6"/><rect class="b" x="14" y="9" width="9" height="6"/><rect class="b" x="14" y="17" width="9" height="6"/><path d="M9 12h5M12 4v16" stroke="#555" fill="none"/></g>
<g transform="translate(1587,478)"><path d="M1 3h22v15H10l-5 5v-5H1z" fill="#fff" stroke="#2f7ec4" stroke-width="1.300"/></g>
<g transform="translate(1622,478)"><path d="M4 1h12l6 6v17H4z" fill="#fff" stroke="#555" stroke-width="1.200"/><path d="M16 1v6h6" fill="none" stroke="#555"/><circle cx="6" cy="10" r="2" fill="#4b9cdc"/><path d="M10 10h8M10 15h8M7 20h11" stroke="#4b9cdc"/></g>
<g transform="translate(1657,478)"><path d="M6 1h13v9c0 4-3 7-6.500 7S6 14 6 10z" fill="#fff" stroke="#333" stroke-width="1.300"/><path d="M6 3H1c0 5 2 8 6 9M19 3h5c0 5-2 8-6 9" fill="none" stroke="#333" stroke-width="1.300"/><rect class="b" x="8" y="19" width="9" height="4"/><path d="M12.500 17v2" stroke="#333"/></g>
<!-- Row 7 -->
<g transform="translate(1482,514)"><path d="M3 0h12l7 7v17H3z" fill="#fff" stroke="#555" stroke-width="1.200"/><path d="M15 0v7h7" fill="none" stroke="#555"/><rect x="6" y="16" width="3" height="6" fill="#333"/><rect x="11" y="13" width="3" height="9" fill="#333"/><rect x="16" y="10" width="3" height="12" fill="#333"/></g>
<g transform="translate(1517,514)"><rect x="2" y="5" width="21" height="17" fill="#fff" stroke="#555" stroke-width="1.200"/><text x="13" y="19" font-size="11.500" fill="#4b9cdc" text-anchor="middle">123</text><path d="M9 -1L2 9h4l-3 6 9-9H8l3-7z" fill="#f5a623" stroke="#b87a10" stroke-width=".5"/></g>
<g transform="translate(1552,514)"><rect x="3" y="2" width="9" height="8" fill="#fff" stroke="#aaa"/><rect x="14" y="2" width="9" height="8" fill="#fff" stroke="#aaa"/><rect x="3" y="14" width="9" height="8" fill="#fff" stroke="#aaa"/><path d="M9 -1L2 9h4l-3 6 9-9H8l3-7z" fill="#f5a623" stroke="#b87a10" stroke-width=".5"/><path d="M11 12h13l-5 6v6l-3-1v-5z" fill="#fff" stroke="#555" stroke-width="1.200"/></g>
<g transform="translate(1587,514)"><rect x="1" y="1" width="22" height="22" fill="#2f7ec4"/><path d="M8 4h13v8c-3 0-5 2-6 5-2 1-5 1-7 4z" fill="#fff"/><path d="M4 -1c3 0 5 2 5 5 0 2-3 6-5 8-2-2-4-6-4-8 0-3 2-5 4-5z" fill="#e87a1d"/><circle cx="20" cy="19" r="3.500" fill="#e87a1d"/><circle cx="15" cy="21" r="1.800" fill="#e87a1d"/></g>
<g transform="translate(1622,514)"><g fill="none" stroke="#9a3fb5" stroke-width="1.500" transform="rotate(45 12 12)"><rect x="3" y="3" width="8.500" height="8.500" rx="1.500"/><rect x="12.500" y="3" width="8.500" height="8.500" rx="1.500"/><rect x="3" y="12.500" width="8.500" height="8.500" rx="1.500"/><rect x="12.500" y="12.500" width="8.500" height="8.500" rx="1.500"/></g></g>
<g transform="translate(1657,514)"><path d="M1 3h14l8 9-8 9H1l8-9z" fill="#eaf4fb" stroke="#2f7ec4" stroke-width="1.400"/><path d="M6 19L18 7" stroke="#2f7ec4" stroke-width="1.400"/></g>
<g fill="#555"><circle cx="1486" cy="559" r="1"/><circle cx="1494" cy="559" r="1"/><circle cx="1502" cy="559" r="1"/></g>
</svg>

<!-- status bar -->
<span class="t" style="left:5px;top:979px;font-size:14.500px;color:#444">Page 3 of 3</span>
<svg class="a" style="left:1410px;top:963px" width="260" height="28" viewBox="1410 963 260 28">
<path d="M1416 977h6M1427 977h125M1489 973v8" stroke="#555" fill="none"/><rect x="1476" y="970" width="5" height="14" fill="#555"/>
<path d="M1558 977h10M1563 972v10" stroke="#555" stroke-width="1.500" fill="none"/>
<rect x="1638" y="971" width="19" height="14" fill="#f3f2f1" stroke="#555" stroke-width="1.200"/>
<path d="M1641 974v3M1641 974h3M1654 974v3M1654 974h-3M1641 982v-3M1641 982h3M1654 982v-3M1654 982h-3" stroke="#555" fill="none"/>
</svg>
<span class="t" style="left:1585px;top:977px;font-size:14.500px;color:#777">84%</span>
<span class="t" style="left:1675px;top:979px;font-size:14.500px;color:#555;letter-spacing:.24px">Update available (click to download)</span>

<!-- watermark -->
<span class="t c" style="left:960px;top:915px;font-size:72px;font-weight:bold;color:rgba(0,0,0,.05);font-family:'DejaVu Sans',sans-serif" dir="rtl" lang="ar">نفذلي</span>
<span class="t c" style="left:960px;top:976px;font-size:34px;font-weight:bold;color:rgba(0,0,0,.055);letter-spacing:1px">nafezly.com</span>

<!-- bottom -->
<div class="a" style="left:0;top:991px;width:1920px;height:4px;background:#0a0a0a"></div>
<div class="a" style="left:60px;top:993px;width:360px;height:2px;background:#f2f2f2"></div>
<div class="a" style="left:1104px;top:993px;width:61px;height:2px;background:#444"></div>
</body></html>
